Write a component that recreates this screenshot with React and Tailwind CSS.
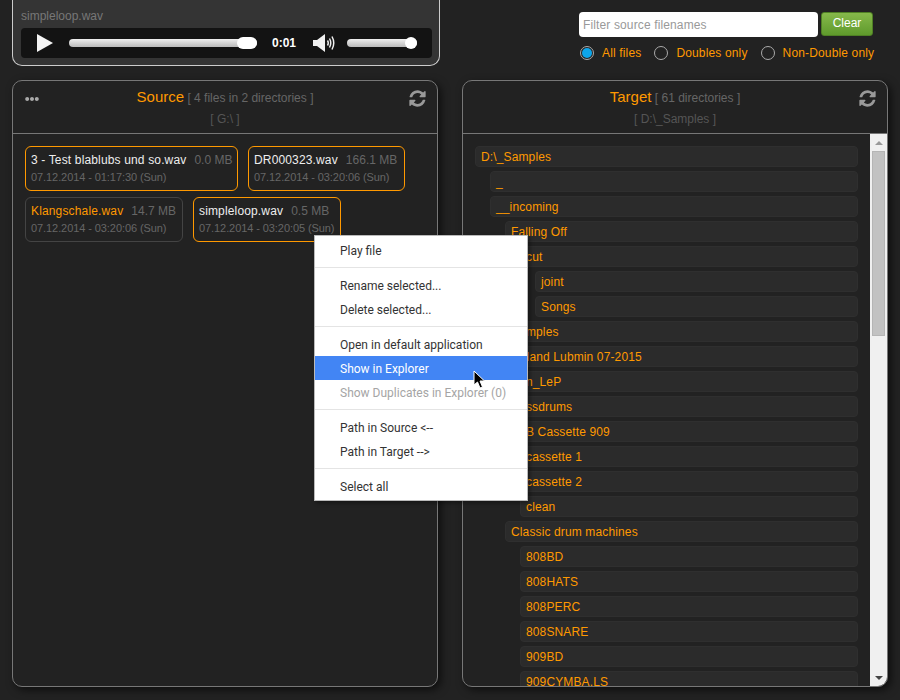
import React from 'react';
import { FaEllipsisH } from 'react-icons/fa';

const files = [
  { name: '3 - Test blablubs und so.wav', size: '0.0 MB', date: '07.12.2014 - 01:17:30 (Sun)', on: true, w: 'w-[213px]' },
  { name: 'DR000323.wav', size: '166.1 MB', date: '07.12.2014 - 03:20:06 (Sun)', on: true, w: 'w-[157px]' },
  { name: 'Klangschale.wav', size: '14.7 MB', date: '07.12.2014 - 03:20:06 (Sun)', on: false, w: 'w-[158px]' },
  { name: 'simpleloop.wav', size: '0.5 MB', date: '07.12.2014 - 03:20:05 (Sun)', on: true, w: 'w-[148px]' },
];

const tree = [
  ['D:\\_Samples', 0], ['_', 1], ['__incoming', 1], ['Falling Off', 2], ['cut', 3], ['joint', 4], ['Songs', 4],
  ['Samples', 2], ['Roland Lubmin 07-2015', 2], ['Ben_LeP', 2], ['Bassdrums', 2], ['B Cassette 909', 3],
  ['cassette 1', 3], ['cassette 2', 3], ['clean', 3], ['Classic drum machines', 2], ['808BD', 3], ['808HATS', 3],
  ['808PERC', 3], ['808SNARE', 3], ['909BD', 3], ['909CYMBA.LS', 3],
];

const indent = ['ml-0', 'ml-[15px]', 'ml-[30px]', 'ml-[45px]', 'ml-[60px]'];

const RefreshIcon = () => (
  <svg className="absolute right-[10px] top-[8px]" width="19" height="19" viewBox="0 0 1792 1792" fill="#999">
    <path d="M1639 1056q0 5-1 7-64 268-268 434.500t-478 166.500q-146 0-282.500-55t-243.500-157l-129 129q-19 19-45 19t-45-19-19-45v-448q0-26 19-45t45-19h448q26 0 45 19t19 45-19 45l-137 137q71 66 161 102t187 36q134 0 250-65t186-179q11-17 53-117 8-23 30-23h192q13 0 22.500 9.500t9.500 22.500zm25-800v448q0 26-19 45t-45 19h-448q-26 0-45-19t-19-45 19-45l138-138q-148-137-349-137-134 0-250 65t-186 179q-11 17-53 117-8 23-30 23h-199q-13 0-22.500-9.500t-9.500-22.500v-7q65-268 270-434.500t480-166.500q146 0 284 55.500t245 156.500l130-129q19-19 45-19t45 19 19 45z" />
  </svg>
);

const Radio = ({ label, on }) => (
  <div className="flex items-center gap-2">
    <div className="w-[14px] h-[14px] rounded-full border border-[#aaa] flex items-center justify-center">
      {on && <div className="w-[10px] h-[10px] rounded-full bg-[#0ea5e9]" />}
    </div>
    <span className="text-[12px] tracking-[0.15px] text-[#ff9900]">{label}</span>
  </div>
);

const PanelHead = ({ title, meta, path, dots }) => (
  <div className="relative h-[53px] shrink-0 border-b border-[#777] text-center">
    <div className="pt-[6px] leading-[20px]">
      <span className="text-[15px] text-[#ff9900]">{title}</span>
      <span className="text-[12px] text-[#666]"> [ {meta} ]</span>
    </div>
    <div className="text-[12px] text-[#555] mt-[2px] leading-[18px]">[ {path} ]</div>
    {dots && <FaEllipsisH className="absolute left-[12px] top-[11px] text-[14px] text-[#aaa]" />}
    <RefreshIcon />
  </div>
);

const MenuItem = ({ label, active, disabled }) => (
  <div className={`h-[24px] pl-[25px] pt-[2px] flex items-center text-[12px] ${active ? 'bg-[#4285f4] text-white' : disabled ? 'text-[#a5a5a5]' : 'text-[#333]'}`}>
    {label}
  </div>
);

const Sep = () => (
  <div className="h-[11px] flex items-center"><div className="w-full h-px bg-[#e4e4e4]" /></div>
);

export default function App() {
  return (
    <div className="relative w-[900px] h-[700px] overflow-hidden bg-[#222222] font-['Liberation_Sans',Arial,sans-serif]">
      {/* top row */}
      <div className="flex h-[80px] pl-[12px]">
        <div className="w-[428px] h-[76px] -mt-[10px] rounded-[10px] border border-[#ccc] border-t-0 bg-[#343434] pl-[8px] pt-[19px]">
          <div className="text-[12px] leading-[14px] text-[#777]">simpleloop.wav</div>
          <div className="mt-[5px] w-[411px] h-[30px] rounded-[4px] bg-[#131313] flex items-center pl-[16px]">
            <svg width="16" height="18" viewBox="0 0 16 18"><path d="M0 0 L16 9 L0 18 Z" fill="#f4f4f4" /></svg>
            <div className="relative ml-[16px] w-[188px] h-[8px] rounded-full bg-gradient-to-b from-[#eee] to-[#bbb]">
              <div className="absolute right-0 -top-[2px] w-[20px] h-[12px] rounded-full bg-white" />
            </div>
            <span className="ml-[15px] w-[41px] text-[12px] font-bold text-white">0:01</span>
            <svg width="22" height="18" viewBox="0 0 22 18" fill="none">
              <path d="M0 6 H4 L12 0 V18 L4 12 H0 Z" fill="#f0f0f0" />
              <path d="M14.500 6.500 Q16 9 14.500 11.500 M16.500 4.500 Q19 9 16.500 13.500 M19 2.500 Q22.500 9 19 15.500" stroke="#f0f0f0" strokeWidth="1.500" />
            </svg>
            <div className="relative ml-[12px] w-[70px] h-[8px] rounded-full bg-gradient-to-b from-[#eee] to-[#bbb]">
              <div className="absolute right-0 -top-[2px] w-[12px] h-[12px] rounded-full bg-white" />
            </div>
          </div>
        </div>

        <div className="ml-[139px] pt-[12px]">
          <div className="flex items-start gap-[3px]">
            <div className="w-[239px] h-[25px] rounded-[4px] bg-white pl-[4px] text-[12px] tracking-[0.13px] leading-[26px] text-[#999]">Filter source filenames</div>
            <div className="w-[52px] h-[24px] rounded-[3px] bg-gradient-to-b from-[#86b94a] to-[#5f9a2c] border border-[#4f8024] text-center text-[12px] leading-[21px] text-white">Clear</div>
          </div>
          <div className="flex gap-[13px] pt-[7px] pl-[1px]">
            <Radio label="All files" on />
            <Radio label="Doubles only" />
            <Radio label="Non-Double only" />
          </div>
        </div>
      </div>

      {/* panels */}
      <div className="flex gap-[24px] pl-[12px]">
        <div className="w-[426px] h-[607px] rounded-[10px] border border-[#777] shadow-[3px_3px_8px_rgba(0,0,0,0.6)] bg-[#222222] flex flex-col">
          <PanelHead title="Source" meta="4 files in 2 directories" path="G:\" dots />
          <div className="flex flex-wrap gap-x-[10px] gap-y-[6px] pl-[12px] pt-[12px] pr-[20px]">
            {files.map((f) => (
              <div key={f.name} className={`h-[45px] rounded-[6px] border px-[5px] ${f.w} ${f.on ? 'border-[#ff9900]' : 'border-[#444]'}`}>
                <div className="flex pt-[6px] leading-[14px] text-[12px] whitespace-nowrap">
                  <span className={`tracking-[0.15px] ${f.on ? 'text-[#eee]' : 'text-[#ff9900]'}`}>{f.name}</span>
                  <span className="ml-[8px] text-[#666]">{f.size}</span>
                </div>
                <div className="mt-[3px] text-[11px] tracking-[-0.08px] leading-[14px] text-[#666] whitespace-nowrap">{f.date}</div>
              </div>
            ))}
          </div>
        </div>

        <div className="w-[426px] h-[607px] rounded-[10px] border border-[#777] shadow-[3px_3px_8px_rgba(0,0,0,0.6)] bg-[#222222] flex flex-col overflow-hidden">
          <PanelHead title="Target" meta="61 directories" path="D:\_Samples" />
          <div className="flex flex-1 min-h-0">
            <div className="flex-1 overflow-hidden pl-[12px] pr-[12px] pt-[12px]">
              {tree.map(([name, level]) => (
                <div key={name} className={`h-[21px] mb-[4px] rounded-[4px] bg-[#2b2b2b] border border-[#2f2f2f] pl-[5px] text-[12px] tracking-[0.13px] leading-[21px] text-[#ff9900] ${indent[level]}`}>
                  {name}
                </div>
              ))}
            </div>
            <div className="w-[17px] shrink-0 bg-[#f0f0f0] flex flex-col items-center">
              <div className="h-[17px] flex items-center justify-center">
                <div className="w-0 h-0 border-x-[4px] border-x-transparent border-b-[4px] border-b-[#999]" />
              </div>
              <div className="w-[13px] h-[185px] bg-[#c2c2c2] border border-[#b5b5b5]" />
              <div className="mt-auto h-[17px] flex items-center justify-center">
                <div className="w-0 h-0 border-x-[4px] border-x-transparent border-t-[4px] border-t-[#444]" />
              </div>
            </div>
          </div>
        </div>
      </div>

      {/* context menu */}
      <div className="absolute left-[314px] top-[235px] w-[214px] h-[266px] bg-white border border-[#bababa] shadow-[2px_2px_4px_rgba(0,0,0,0.4)] pt-[2px] font-['Roboto',sans-serif]">
        <MenuItem label="Play file" />
        <Sep />
        <MenuItem label="Rename selected..." />
        <MenuItem label="Delete selected..." />
        <Sep />
        <MenuItem label="Open in default application" />
        <MenuItem label="Show in Explorer" active />
        <MenuItem label="Show Duplicates in Explorer (0)" disabled />
        <Sep />
        <MenuItem label="Path in Source <--" />
        <MenuItem label="Path in Target -->" />
        <Sep />
        <MenuItem label="Select all" />
      </div>

      {/* mouse cursor */}
      <svg className="absolute left-[473px] top-[370px]" width="13" height="20" viewBox="0 0 13 20">
        <path d="M1 1 L1 15 L4.5 12 L7 18 L9.5 17 L7 11 L11.5 11 Z" fill="#000" stroke="#fff" strokeWidth="1" />
      </svg>
    </div>
  );
}
